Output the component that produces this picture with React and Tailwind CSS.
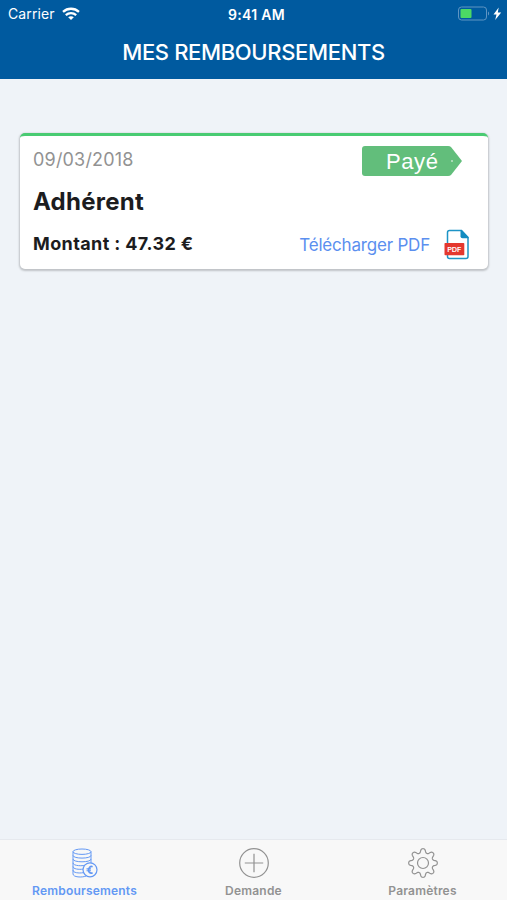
import React from 'react';

// eight rounded teeth around a 30x30 box
const gearPath = () => {
  const points = [];
  for (let i = 0; i < 160; i++) {
    const angle = (i / 160) * Math.PI * 2;
    const wave = Math.tanh(1.4 * Math.cos(angle * 8)) / Math.tanh(1.4);
    const r = 12.3 + wave * 2;
    points.push(`${(15 + r * Math.sin(angle)).toFixed(2)} ${(15 - r * Math.cos(angle)).toFixed(2)}`);
  }
  return `M${points.join('L')}Z`;
};

function WifiIcon() {
  return (
    <svg width="18" height="14" viewBox="0 0 18 14" fill="none" stroke="white" strokeWidth="2.3">
      <path d="M1 4.900C5.600.7 12.400.7 17 4.900" />
      <path d="M3.800 8.100c3-2.600 7.400-2.600 10.400 0" />
      <path d="M9 13 6.200 10.300c1.600-1.400 4-1.400 5.600 0Z" fill="white" stroke="none" />
    </svg>
  );
}

function BatteryIcon() {
  return (
    <svg width="44" height="16" viewBox="0 0 44 16" fill="none">
      <rect x="0.500" y="1" width="28" height="13" rx="3" stroke="#5f95c3" />
      <rect x="2.500" y="3" width="11" height="9" rx="1" fill="#4cd964" />
      <path d="M30 5.500v4c1.500-.5 1.500-3.500 0-4Z" fill="#5f95c3" />
      <path d="M40.700 1.500 35.500 8.400h3L37.200 14l6-7.500h-3.400Z" fill="white" />
    </svg>
  );
}

function PdfIcon() {
  return (
    <svg width="26" height="32" viewBox="0 0 26 32" fill="none">
      <path d="M3.500 14V3.500Q3.500 1.500 5.500 1.500h12l6.500 7V27.500Q24 29.500 22 29.500H5.500Q3.500 29.500 3.500 27.500V26" stroke="#1d94c6" strokeWidth="1.500" />
      <path d="M16.500 1.500h1.500L24.500 8v1.200h-6q-2 0-2-2Z" fill="#138cc0" />
      <rect x="0.500" y="14" width="19.800" height="12.200" rx="0.800" fill="#e4382f" />
      <text x="3.300" y="22.700" fill="white" fontSize="6.500" fontWeight="600" fontFamily="Inter, sans-serif" textLength="13.800" lengthAdjust="spacingAndGlyphs">PDF</text>
    </svg>
  );
}

function CoinsIcon() {
  return (
    <svg width="26" height="30" viewBox="0 0 26 30" fill="none" stroke="currentColor" strokeWidth="1">
      <ellipse cx="10" cy="3.700" rx="9" ry="2.700" />
      <path d="M1 3.700v22.200c0 3.500 9 3.700 13 2.200M19 3.700v12" />
      <path d="M1 7.400c0 3.600 18 3.600 18 0M1 11.100c0 3.600 18 3.600 18 0M1 14.800c0 3.400 10 3.500 14 2M1 18.500c0 2.600 6 3.200 10 2.600M1 22.200c0 2.600 6 3.200 10 2.500" />
      <circle cx="18" cy="21.800" r="7" fill="#f8f8f8" strokeWidth="1.200" />
      <path d="M20.600 18.700c-4.600-2-6 8 0 6.200" strokeWidth="1.700" />
      <path d="M14.500 20.900h4.500M14.500 22.700h4.500" strokeWidth="1.100" />
    </svg>
  );
}

function PlusIcon() {
  return (
    <svg width="30" height="30" viewBox="0 0 30 30" fill="none" stroke="currentColor" strokeWidth="1.200">
      <circle cx="15" cy="15" r="14.300" />
      <path d="M15 5.800v18.400M5.800 15h18.400" />
    </svg>
  );
}

function GearIcon() {
  return (
    <svg width="30" height="30" viewBox="0 0 30 30" fill="none" stroke="currentColor" strokeWidth="1.200" strokeLinejoin="round">
      <path d={gearPath()} />
      <circle cx="15" cy="15" r="5.500" />
    </svg>
  );
}

const tabs = [
  { label: 'Remboursements', Icon: CoinsIcon, color: 'text-[#6398f4]' },
  { label: 'Demande', Icon: PlusIcon, color: 'text-[#929292]' },
  { label: 'Paramètres', Icon: GearIcon, color: 'text-[#929292]' },
];

export default function App() {
  return (
    <div className="flex h-screen w-full flex-col overflow-hidden bg-[#eff3f8] font-['Inter',sans-serif]">
      <header className="h-[79px] shrink-0 bg-[#005a9f] text-white">
        <div className="grid h-[27px] grid-cols-3 items-center">
          <div className="flex items-center gap-[7px] pl-2 text-[14px] tracking-[0.1px]">
            <span>Carrier</span>
            <WifiIcon />
          </div>
          <span className="pt-px pl-[6px] text-center text-[14px] font-semibold tracking-[0.3px]">9:41 AM</span>
          <div className="flex justify-end pr-[5px]">
            <BatteryIcon />
          </div>
        </div>
        <h1 className="flex h-[50px] items-center justify-center text-[22px] font-medium tracking-[-0.35px]">MES REMBOURSEMENTS</h1>
      </header>

      <main className="flex-1 pt-[54px] pr-[19px] pl-5">
        <section className="h-[136px] rounded-[5px] border-t-[3px] border-[#49cb72] bg-white pr-[18px] pl-[13px] shadow-[0_1px_2px_1px_rgba(0,0,0,0.2)]">
          <div className="flex h-[46px] items-center justify-between">
            <span className="pt-[1px] text-[18px] tracking-[0.18px] text-[#929292]">09/03/2018</span>
            <div className="relative mt-[4px] mr-[8px] h-[30px] w-[100px]">
              <svg className="absolute inset-0" width="100" height="30" viewBox="0 0 100 30">
                <path d="M3 0h83q2 0 3 1l11 14-11 14q-1 1-3 1H3q-3 0-3-3V3q0-3 3-3Z" fill="#62be7b" />
                <circle cx="90" cy="15" r="0.800" fill="white" />
              </svg>
              <span className="relative flex h-[30px] items-center pl-6 font-['Liberation_Sans',sans-serif] text-[22px] tracking-[0.6px] text-white">Payé</span>
            </div>
          </div>
          <h2 className="flex h-[38px] items-center pt-[2px] text-[24px] font-bold tracking-[0.25px] text-[#1c1c1e]">Adhérent</h2>
          <div className="flex h-[48px] items-center justify-between">
            <span className="pb-px text-[18px] font-bold tracking-[0.38px] text-[#1c1c1e]">Montant : 47.32 €</span>
            <a className="flex items-center gap-[14px] pt-[2px] text-[17px] tracking-[-0.2px] text-[#5b8fef]">
              <span className="pt-px">Télécharger PDF</span>
              <PdfIcon />
            </a>
          </div>
        </section>
      </main>

      <nav className="grid h-[61px] shrink-0 grid-cols-3 border-t border-[#e6e9ee] bg-[#f8f8f8]">
        {tabs.map(({ label, Icon, color }) => (
          <div key={label} className={`flex flex-col items-center pt-2 ${color}`}>
            <Icon />
            <span className="mt-[4px] text-[12px] leading-[18px] font-semibold tracking-[0.2px]">{label}</span>
          </div>
        ))}
      </nav>
    </div>
  );
}
